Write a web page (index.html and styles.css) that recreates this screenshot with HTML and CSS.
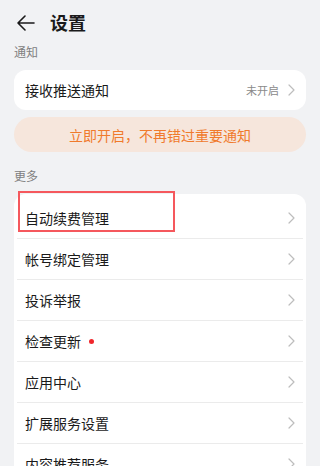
FILE: index.html
```html
<!DOCTYPE html>
<html lang="zh-CN">
<head>
    <meta charset="UTF-8">
    <meta name="viewport" content="width=device-width, initial-scale=1.0">
    <title>设置</title>
    <link rel="stylesheet" href="styles.css">
</head>
<body>
    <div class="page">
        <div class="header">
            <svg class="back" width="20" height="16" viewBox="0 0 20 16">
                <path d="M18 8H2M9 1L2 8l7 7" fill="none" stroke="#1a1a1a" stroke-width="1.6" stroke-linecap="round" stroke-linejoin="round"/>
            </svg>
            <h1>设置</h1>
        </div>

        <div class="section-label">通知</div>
        <div class="card">
            <div class="row single">
                <span class="row-title">接收推送通知</span>
                <span class="row-value">未开启</span>
                <svg class="chev" width="7" height="12" viewBox="0 0 7 12"><path d="M1 1l5 5-5 5" fill="none" stroke="#bdbdbd" stroke-width="1.2" stroke-linecap="round" stroke-linejoin="round"/></svg>
            </div>
        </div>
        <div class="banner">立即开启，不再错过重要通知</div>

        <div class="section-label more">更多</div>
        <div class="card list">
            <div class="row">
                <span class="row-title">自动续费管理</span>
                <svg class="chev" width="7" height="12" viewBox="0 0 7 12"><path d="M1 1l5 5-5 5" fill="none" stroke="#bdbdbd" stroke-width="1.2" stroke-linecap="round" stroke-linejoin="round"/></svg>
                <div class="highlight"></div>
            </div>
            <div class="row">
                <span class="row-title">帐号绑定管理</span>
                <svg class="chev" width="7" height="12" viewBox="0 0 7 12"><path d="M1 1l5 5-5 5" fill="none" stroke="#bdbdbd" stroke-width="1.2" stroke-linecap="round" stroke-linejoin="round"/></svg>
            </div>
            <div class="row">
                <span class="row-title">投诉举报</span>
                <svg class="chev" width="7" height="12" viewBox="0 0 7 12"><path d="M1 1l5 5-5 5" fill="none" stroke="#bdbdbd" stroke-width="1.2" stroke-linecap="round" stroke-linejoin="round"/></svg>
            </div>
            <div class="row">
                <span class="row-title">检查更新<i class="dot"></i></span>
                <svg class="chev" width="7" height="12" viewBox="0 0 7 12"><path d="M1 1l5 5-5 5" fill="none" stroke="#bdbdbd" stroke-width="1.2" stroke-linecap="round" stroke-linejoin="round"/></svg>
            </div>
            <div class="row">
                <span class="row-title">应用中心</span>
                <svg class="chev" width="7" height="12" viewBox="0 0 7 12"><path d="M1 1l5 5-5 5" fill="none" stroke="#bdbdbd" stroke-width="1.2" stroke-linecap="round" stroke-linejoin="round"/></svg>
            </div>
            <div class="row">
                <span class="row-title">扩展服务设置</span>
                <svg class="chev" width="7" height="12" viewBox="0 0 7 12"><path d="M1 1l5 5-5 5" fill="none" stroke="#bdbdbd" stroke-width="1.2" stroke-linecap="round" stroke-linejoin="round"/></svg>
            </div>
            <div class="row">
                <span class="row-title">内容推荐服务</span>
                <svg class="chev" width="7" height="12" viewBox="0 0 7 12"><path d="M1 1l5 5-5 5" fill="none" stroke="#bdbdbd" stroke-width="1.2" stroke-linecap="round" stroke-linejoin="round"/></svg>
            </div>
        </div>
    </div>
</body>
</html>
```

FILE: styles.css
```css
body {
    margin: 0;
    background-color: #f1f2f4;
    font-family: "Noto Sans CJK SC", "Noto Sans", sans-serif;
    color: #1a1a1a;
    height: 466px;
    overflow: hidden;
}

.page {
    padding: 0 14px;
}

.header {
    display: flex;
    align-items: center;
    height: 44px;
}

.header .back {
    margin-left: 2px;
    margin-top: 1px;
}

.header h1 {
    margin: 0 0 0 14px;
    font-size: 18px;
    font-weight: bold;
    line-height: 24px;
}

.section-label {
    font-size: 12px;
    color: #808080;
    line-height: 16px;
    height: 26px;
}

.section-label.more {
    margin-top: 16px;
}

.card {
    background-color: #ffffff;
    border-radius: 12px;
}

.card.list {
    padding-top: 4px;
    border-radius: 12px 12px 0 0;
}

.row {
    display: flex;
    align-items: center;
    height: 40px;
    margin: 0 3px;
    padding: 0 3px 0 8px;
    border-bottom: 1px solid #ebebeb;
    position: relative;
}

.row.single {
    border-bottom: none;
}

.row-title {
    flex: 1;
    font-size: 14px;
    display: flex;
    align-items: center;
}

.row-value {
    font-size: 11px;
    color: #8a8a8a;
    margin-right: 9px;
}

.chev {
    margin-right: 5px;
}

.dot {
    width: 5px;
    height: 5px;
    border-radius: 50%;
    background-color: #f0262b;
    margin-left: 8px;
}

.banner {
    margin-top: 7px;
    height: 35px;
    border-radius: 18px;
    background-color: #f6e6dc;
    color: #f07a2c;
    font-size: 14px;
    display: flex;
    align-items: center;
    justify-content: center;
}

.highlight {
    position: absolute;
    left: 1px;
    top: -7px;
    width: 153px;
    height: 37px;
    border: 2px solid #f5585d;
}
```
